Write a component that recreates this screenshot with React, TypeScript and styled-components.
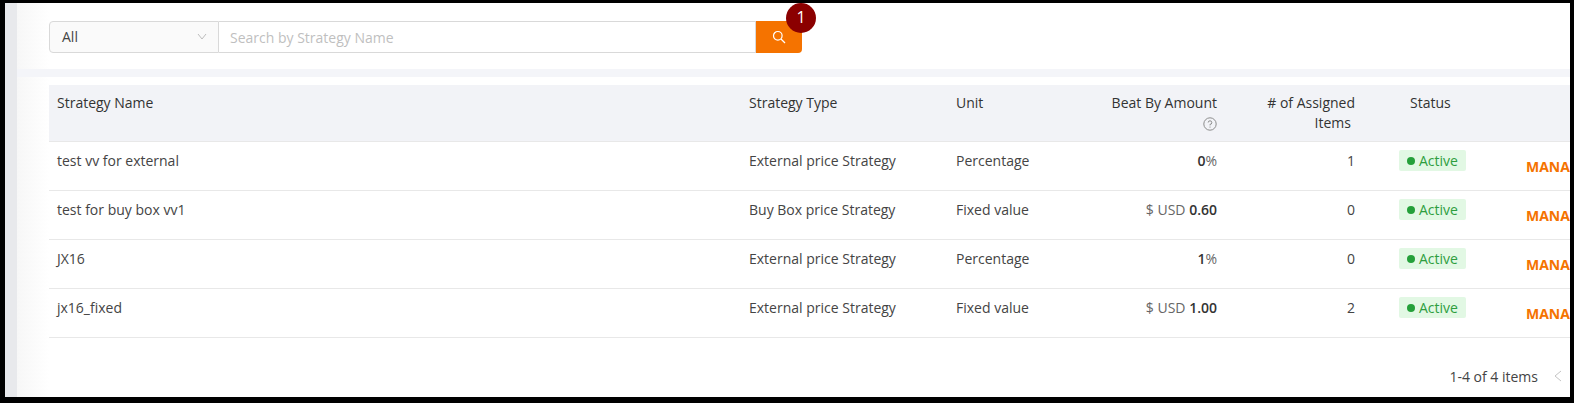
import React from "react";
import styled, { createGlobalStyle } from "styled-components";

const Global = createGlobalStyle`
  html, body { margin: 0; padding: 0; background: #000; overflow: hidden; }
  * { box-sizing: border-box; }
`;

const Frame = styled.div`
  width: 1574px;
  height: 403px;
  background: #000;
  padding: 3px 4px 6px 5px;
  font-family: "Open Sans", "Noto Sans", sans-serif;
  font-size: 14px;
  color: #333;
`;
const Screen = styled.div`
  display: flex;
  height: 100%;
  overflow: hidden;
  background: #fff;
`;
const Strip = styled.div`
  width: 12px;
  flex: none;
  background: #e8e9ec;
`;
const Main = styled.div`
  flex: 1;
  min-width: 0;
  background: linear-gradient(90deg, #f7f7f7 0, #ffffff 32px);
`;
const SearchBar = styled.div`
  height: 66px;
  padding: 18px 0 0 32px;
  display: flex;
  align-items: flex-start;
`;
const SelectBox = styled.div`
  width: 170px;
  height: 32px;
  display: flex;
  align-items: center;
  justify-content: space-between;
  padding: 0 11px 2px 12px;
  background: #fafafa;
  border: 1px solid #d9d9d9;
  border-radius: 4px 0 0 4px;
  color: #444;
`;
const SearchInput = styled.div`
  width: 537px;
  height: 32px;
  display: flex;
  align-items: center;
  padding: 0 11px;
  border: 1px solid #d9d9d9;
  border-left: none;
  background: #fff;
  color: #bfbfbf;
`;
const SearchButton = styled.div`
  position: relative;
  width: 46px;
  height: 32px;
  display: flex;
  align-items: center;
  justify-content: center;
  background: #f57300;
  border-radius: 0 4px 4px 0;
`;
const Badge = styled.div`
  position: absolute;
  left: 30px;
  top: -18px;
  width: 30px;
  height: 30px;
  border-radius: 50%;
  background: #8b0000;
  color: #fff;
  font-size: 16px;
  line-height: 28px;
  text-align: center;
`;
const Band = styled.div`
  height: 8px;
  background: #f4f5f9;
`;
const TableWrap = styled.div`
  padding: 8px 0 0 32px;
  width: 1650px;
`;
const Row = styled.div<{ $head?: boolean }>`
  display: grid;
  grid-template-columns: 692px 207px 131px 146px 138px 155px 1fr;
  height: ${(p) => (p.$head ? "57px" : "49px")};
  border-bottom: 1px solid #e8e8e8;
  background: ${(p) => (p.$head ? "#f2f3f7" : "transparent")};
  color: ${(p) => (p.$head ? "#333" : "#444")};
  line-height: 20px;
`;
const Cell = styled.div<{ $right?: boolean; $head?: boolean }>`
  padding: ${(p) => (p.$head ? "8px" : "9px")} 8px 0;
  text-align: ${(p) => (p.$right ? "right" : "left")};
`;
const StatusHead = styled.div`
  padding: 8px 0 0 47px;
`;
const HelpWrap = styled.div`
  height: 20px;
  display: flex;
  justify-content: flex-end;
  align-items: center;
  margin-top: 1px;
`;
const LastLine = styled.span`
  display: block;
  padding-right: 4px;
`;
const Muted = styled.span`
  color: #666;
`;
const Strong = styled.b`
  font-weight: 600;
  color: #333;
`;
const StatusCell = styled.div`
  padding: 8px 0 0 36px;
`;
const Pill = styled.span`
  display: inline-flex;
  align-items: center;
  gap: 4px;
  width: 67px;
  height: 21px;
  padding-left: 8px;
  border-radius: 2px;
  background: #e2f8e4;
  color: #2e9e3f;
  vertical-align: top;
`;
const Dot = styled.i`
  width: 8px;
  height: 8px;
  border-radius: 50%;
  background: #25a03a;
`;
const Manage = styled.div`
  padding: 15px 0 0 8px;
  color: #f57300;
  font-weight: 700;
  white-space: nowrap;
`;
const Pager = styled.div`
  height: 76px;
  display: flex;
  align-items: center;
  justify-content: flex-end;
  gap: 15px;
  padding: 0 7px 0 0;
  color: #444;
`;

const rows = [
  { name: "test vv for external", type: "External price Strategy", unit: "Percentage", amount: <><Strong>0</Strong><Muted>%</Muted></>, items: 1 },
  { name: "test for buy box vv1", type: "Buy Box price Strategy", unit: "Fixed value", amount: <><Muted>$ USD </Muted><Strong>0.60</Strong></>, items: 0 },
  { name: "JX16", type: "External price Strategy", unit: "Percentage", amount: <><Strong>1</Strong><Muted>%</Muted></>, items: 0 },
  { name: "jx16_fixed", type: "External price Strategy", unit: "Fixed value", amount: <><Muted>$ USD </Muted><Strong>1.00</Strong></>, items: 2 },
];

export default function App() {
  return (
    <Frame>
      <Global />
      <Screen>
        <Strip />
        <Main>
          <SearchBar>
            <SelectBox>
              All
              <svg width="10" height="10" viewBox="0 0 10 10" fill="none" stroke="#bdbdbd" strokeWidth="1">
                <path d="M1 3l4 5 4-5" />
              </svg>
            </SelectBox>
            <SearchInput>Search by Strategy Name</SearchInput>
            <SearchButton>
              <svg width="14" height="14" viewBox="0 0 14 14" fill="none" stroke="#fff" strokeWidth="1.2">
                <circle cx="5.8" cy="5.8" r="4.3" />
                <path d="m9 9 4 4" />
              </svg>
              <Badge>1</Badge>
            </SearchButton>
          </SearchBar>
          <Band />
          <TableWrap>
            <Row $head>
              <Cell $head>Strategy Name</Cell>
              <Cell $head>Strategy Type</Cell>
              <Cell $head>Unit</Cell>
              <Cell $head $right>
                Beat By Amount
                <HelpWrap>
                  <svg width="14" height="14" viewBox="0 0 14 14" fill="none" stroke="#8c8c8c" strokeWidth="1">
                    <circle cx="7" cy="7" r="6.2" />
                    <path d="M5.2 5.5A1.8 1.8 0 1 1 7 7.4v1" />
                    <path d="M7 9.6v1" />
                  </svg>
                </HelpWrap>
              </Cell>
              <Cell $head $right>
                # of Assigned
                <LastLine>Items</LastLine>
              </Cell>
              <StatusHead>Status</StatusHead>
              <div />
            </Row>
            {rows.map((r) => (
              <Row key={r.name}>
                <Cell>{r.name}</Cell>
                <Cell>{r.type}</Cell>
                <Cell>{r.unit}</Cell>
                <Cell $right>{r.amount}</Cell>
                <Cell $right>{r.items}</Cell>
                <StatusCell>
                  <Pill>
                    <Dot />
                    Active
                  </Pill>
                </StatusCell>
                <Manage>MANAGE</Manage>
              </Row>
            ))}
          </TableWrap>
          <Pager>
            1-4 of 4 items
            <svg width="10" height="12" viewBox="0 0 10 12" fill="none" stroke="#c4c4c4" strokeWidth="1">
              <path d="M8 1 2 6l6 5" />
            </svg>
          </Pager>
        </Main>
      </Screen>
    </Frame>
  );
}
